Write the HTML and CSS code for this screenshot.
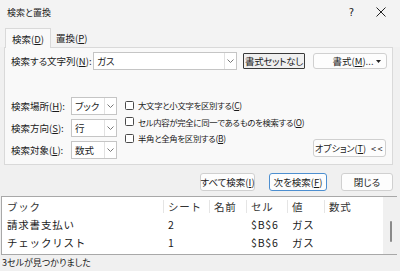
FILE: index.html
```html
<!DOCTYPE html>
<html lang="ja">
<head>
    <meta charset="UTF-8">
    <title>検索と置換</title>
    <link rel="stylesheet" href="styles.css">
</head>
<body>
    <div class="dialog">
        <div class="titlebar">
            <span class="title">検索と置換</span>
            <span class="help">?</span>
            <span class="close">
                <svg width="10" height="10" viewBox="0 0 10 10"><path d="M0.5 0.5 L9.5 9.5 M9.5 0.5 L0.5 9.5" stroke="#222" stroke-width="1" fill="none"/></svg>
            </span>
        </div>
        <div class="tabs">
            <div class="tab active">検索(<u>D</u>)</div>
            <div class="tab">置換(<u>P</u>)</div>
        </div>
        <div class="panel">
            <div class="find-row">
                <label class="find-label">検索する文字列(<u>N</u>):</label>
                <div class="combo find-input">
                    <span class="combo-text">ガス</span>
                    <span class="combo-arrow"><svg width="7" height="4" viewBox="0 0 7 4"><path d="M0.5 0.5 L3.5 3.5 L6.5 0.5" stroke="#777" fill="none"/></svg></span>
                </div>
                <button class="btn btn-noformat">書式セットなし</button>
                <button class="btn btn-format"><span>書式(<u>M</u>)...</span><svg width="5" height="3" viewBox="0 0 5 3"><path d="M0 0 L5 0 L2.5 3 Z" fill="#222"/></svg></button>
            </div>
            <div class="options">
                <div class="selects">
                    <label>検索場所(<u>H</u>):</label>
                    <div class="combo">
                        <span class="combo-text">ブック</span>
                        <span class="combo-arrow"><svg width="7" height="4" viewBox="0 0 7 4"><path d="M0.5 0.5 L3.5 3.5 L6.5 0.5" stroke="#777" fill="none"/></svg></span>
                    </div>
                    <label>検索方向(<u>S</u>):</label>
                    <div class="combo">
                        <span class="combo-text">行</span>
                        <span class="combo-arrow"><svg width="7" height="4" viewBox="0 0 7 4"><path d="M0.5 0.5 L3.5 3.5 L6.5 0.5" stroke="#777" fill="none"/></svg></span>
                    </div>
                    <label>検索対象(<u>L</u>):</label>
                    <div class="combo">
                        <span class="combo-text">数式</span>
                        <span class="combo-arrow"><svg width="7" height="4" viewBox="0 0 7 4"><path d="M0.5 0.5 L3.5 3.5 L6.5 0.5" stroke="#777" fill="none"/></svg></span>
                    </div>
                </div>
                <div class="checks">
                    <div class="check"><span class="box"></span>大文字と小文字を区別する(<u>C</u>)</div>
                    <div class="check"><span class="box"></span>セル内容が完全に同一であるものを検索する(<u>O</u>)</div>
                    <div class="check"><span class="box"></span>半角と全角を区別する(<u>B</u>)</div>
                </div>
                <button class="btn btn-options"><span>オプション(<u>T</u>)</span><span class="chev">&lt;&lt;</span></button>
            </div>
        </div>
        <div class="actions">
            <button class="btn btn-findall">すべて検索(<u>I</u>)</button>
            <button class="btn btn-next">次を検索(<u>F</u>)</button>
            <button class="btn btn-close">閉じる</button>
        </div>
        <div class="results">
            <div class="grid">
                <div class="row head">
                    <span>ブック</span><span>シート</span><span>名前</span><span>セル</span><span>値</span><span>数式</span>
                </div>
                <div class="row">
                    <span>請求書支払い</span><span>2</span><span></span><span>$B$6</span><span>ガス</span><span></span>
                </div>
                <div class="row">
                    <span>チェックリスト</span><span>1</span><span></span><span>$B$6</span><span>ガス</span><span></span>
                </div>
            </div>
            <div class="scrollbar"><span class="thumb"></span></div>
        </div>
        <div class="status">3セルが見つかりました</div>
    </div>
</body>
</html>
```

FILE: styles.css
```css
* {
    margin: 0;
    padding: 0;
    box-sizing: border-box;
}
body {
    width: 400px;
    height: 271px;
    overflow: hidden;
    background: #f0f0f0;
    font-family: "Noto Sans CJK JP", "Noto Sans", sans-serif;
    font-feature-settings: "palt";
    font-size: 9.5px;
    color: #1a1a1a;
    white-space: nowrap;
}
u {
    text-decoration: underline;
    text-underline-offset: 1px;
}
button {
    font: inherit;
    color: inherit;
    flex-shrink: 0;
}
.dialog {
    display: flex;
    flex-direction: column;
    height: 271px;
}
/* タイトル */
.titlebar {
    display: flex;
    align-items: center;
    height: 28px;
    padding: 0 14px 4px 7px;
    background: #f3f3f3;
}
.title {
    flex: 1;
    font-size: 9px;
}
.help {
    font-family: "DejaVu Sans", sans-serif;
    font-size: 10px;
    margin-right: 22px;
}
.close {
    display: flex;
}
/* タブ */
.tabs {
    display: flex;
    height: 19px;
    padding-left: 5px;
    background: #f3f3f3;
}
.tab {
    display: flex;
    align-items: center;
    padding: 0 6px;
    height: 19px;
}
.tab.active {
    width: 46px;
    background: #f9f9f9;
    border: 1px solid #d9d9d9;
    border-bottom: none;
    position: relative;
    z-index: 1;
    margin-bottom: -1px;
    height: 20px;
}
.tab + .tab {
    padding-left: 5px;
}
.panel {
    margin: 0 7px 0 4px;
    padding: 4px 6px 5px 6px;
    background: #f9f9f9;
    border: 1px solid #d9d9d9;
}
.find-row {
    display: flex;
    align-items: center;
    height: 18px;
}
.find-label {
    width: 82px;
    flex-shrink: 0;
}
.combo {
    display: flex;
    align-items: center;
    height: 18px;
    background: #fff;
    border: 1px solid #c5c5c5;
}
.combo-text {
    flex: 1;
    padding-left: 3px;
}
.combo-arrow {
    display: flex;
    align-items: center;
    justify-content: center;
    width: 12px;
    height: 100%;
    border-left: 1px solid #e1e1e1;
}
.find-input {
    width: 144px;
    flex-shrink: 0;
}
.btn {
    display: flex;
    align-items: center;
    justify-content: center;
    height: 18px;
    background: #fdfdfd;
    border: 1px solid #d0d0d0;
    border-radius: 3px;
}
.btn-noformat {
    width: 62px;
    height: 16px;
    margin-left: 6px;
    background: #f0f0f0;
    border: 1px solid #3a3a3a;
    border-radius: 1px;
    letter-spacing: -0.3px;
}
.btn-format {
    width: 74px;
    height: 16px;
    margin-left: 8px;
    justify-content: flex-start;
    padding: 0 5px 0 16px;
}
.btn-format span {
    flex: 1;
}
.options {
    display: flex;
    margin-top: 27px;
}
.selects {
    display: grid;
    grid-template-columns: 60px 46px;
    grid-auto-rows: 18px;
    row-gap: 4px;
    align-items: center;
    flex-shrink: 0;
}
.checks {
    flex: 1;
    min-width: 0;
    margin-left: 7px;
    font-size: 8.4px;
    letter-spacing: -0.3px;
}
.check {
    display: flex;
    align-items: center;
    height: 16.5px;
}
.box {
    width: 9px;
    height: 9px;
    margin: 0 4px 0 1px;
    background: #fff;
    border: 1px solid #4a4a4a;
    border-radius: 1.5px;
    flex-shrink: 0;
}
.btn-options {
    width: 73px;
    margin: 0 0 2px auto;
    align-self: flex-end;
    gap: 5px;
    font-size: 9px;
}
.chev {
    letter-spacing: 1.5px;
}
/* ボタン */
.actions {
    display: flex;
    justify-content: flex-end;
    gap: 14px;
    margin-top: 8px;
    padding-right: 7px;
}
.btn-findall {
    width: 55px;
}
.btn-next {
    width: 58px;
    border-color: #4d8fd0;
}
.btn-close {
    width: 52px;
}
/* 結果 */
.results {
    display: flex;
    height: 59px;
    margin: 5px 3px 0 1px;
    background: #fff;
    border-top: 1px solid #a8a8a8;
    border-left: 1px solid #a8a8a8;
    border-bottom: 1px solid #a8a8a8;
    font-feature-settings: normal;
    font-size: 10.5px;
    letter-spacing: 0.8px;
}
.grid {
    flex: 1;
}
.row {
    display: grid;
    grid-template-columns: 161px 46px 37px 41px 37px 1fr;
    height: 17.5px;
    align-items: center;
}
.row.head {
    height: 19px;
    color: #333;
}
.row span {
    padding-left: 4px;
}
.row span:first-child {
    padding-left: 5px;
}
.row.head span + span {
    border-left: 1px solid #e5e5e5;
    height: 13px;
    line-height: 13px;
}
.row span + span {
    border-left: 1px solid transparent;
}
.scrollbar {
    position: relative;
    width: 14px;
    background: #f0f0f0;
}
.thumb {
    position: absolute;
    left: 7px;
    top: 24px;
    width: 2px;
    height: 21px;
    border-radius: 1px;
    background: #8a8a8a;
}
.status {
    flex: 1;
    padding-left: 2px;
    font-size: 9px;
    line-height: 15px;
}
```
